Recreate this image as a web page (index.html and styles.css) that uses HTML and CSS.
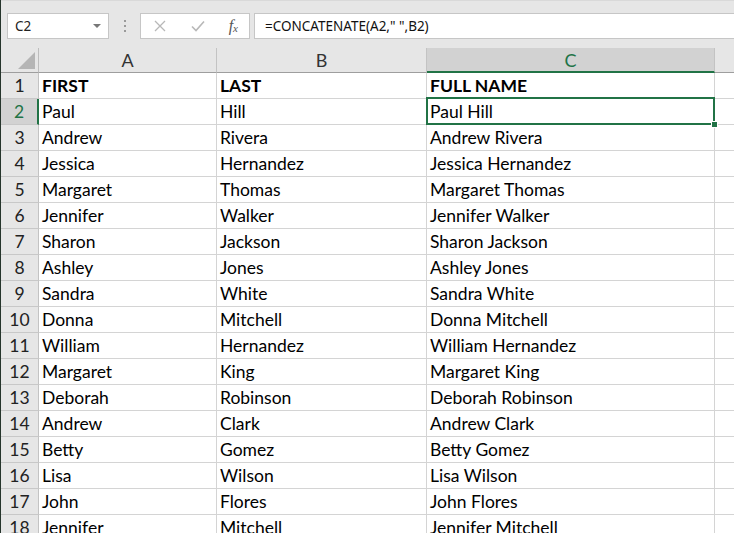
FILE: index.html
```html
<!DOCTYPE html>
<html>
<head>
<meta charset="utf-8">
<link rel="stylesheet" href="styles.css">
</head>
<body>
<div class="app">
  <div class="toolbar">
    <div class="namebox"><span>C2</span><span class="caret"></span></div>
    <div class="dots"><i></i><i></i><i></i></div>
    <div class="fxbox">
      <svg class="ico" width="14" height="14" viewBox="0 0 14 14"><path d="M2 2 L12 12 M12 2 L2 12" stroke="#b8b8b8" stroke-width="1.3" fill="none"/></svg>
      <svg class="ico" width="16" height="14" viewBox="0 0 16 14"><path d="M2 7.5 L6 11.5 L14 2.5" stroke="#b8b8b8" stroke-width="1.6" fill="none"/></svg>
      <span class="fx">f<sub>x</sub></span>
    </div>
    <div class="formula">=CONCATENATE(A2," ",B2)</div>
  </div>
  <div class="sheet">
    <div class="hd corner"><span class="tri"></span></div>
    <div class="hd col">A</div>
    <div class="hd col">B</div>
    <div class="hd col sel">C</div>
    <div class="hd col last"></div>
  </div>
  <div class="sheet rows" id="rows"></div>
</div>
<script src="app.js"></script>
</body>
</html>
```
FILE: app.js
```js
var data = [
  ["FIRST","LAST","FULL NAME"],
  ["Paul","Hill"],["Andrew","Rivera"],["Jessica","Hernandez"],["Margaret","Thomas"],
  ["Jennifer","Walker"],["Sharon","Jackson"],["Ashley","Jones"],["Sandra","White"],
  ["Donna","Mitchell"],["William","Hernandez"],["Margaret","King"],["Deborah","Robinson"],
  ["Andrew","Clark"],["Betty","Gomez"],["Lisa","Wilson"],["John","Flores"],["Jennifer","Mitchell"]
];
var html = "";
data.forEach(function (r, i) {
  var n = i + 1;
  var full = i === 0 ? r[2] : r[0] + " " + r[1];
  var b = i === 0 ? " bold" : "";
  html += '<div class="hd rh' + (n === 2 ? " sel" : "") + '">' + n + '</div>';
  html += '<div class="cell' + b + '">' + r[0] + '</div>';
  html += '<div class="cell' + b + '">' + r[1] + '</div>';
  html += '<div class="cell' + b + (n === 2 ? " active" : "") + '">' + full + (n === 2 ? '<span class="handle"></span>' : '') + '</div>';
  html += '<div class="cell last"></div>';
});
document.getElementById("rows").innerHTML = html;
```
FILE: styles.css
```css
html, body { margin: 0; padding: 0; background: #fff; }
body { width: 734px; height: 533px; overflow: hidden; }
.app { border-left: 1px solid #26352c; height: 533px; box-sizing: border-box; font-family: Lato, "Noto Sans", sans-serif; color: #000; }
.toolbar { height: 48px; background: #e6e6e6; box-sizing: border-box; padding-top: 12px; display: flex; align-items: flex-start; border-top: 1px solid #d9d9d9; }
.toolbar > div { height: 26px; box-sizing: border-box; background: #fff; border: 1px solid #c6c6c6; }
.namebox { margin-left: 6px; width: 102px; display: flex; align-items: center; justify-content: space-between; padding: 0 7px 0 7px; font-family: "Noto Sans", sans-serif; font-size: 13.5px; color: #222; }
.caret { width: 0; height: 0; border-left: 4px solid transparent; border-right: 4px solid transparent; border-top: 4px solid #777; }
.toolbar > .dots { background: transparent; border: none; width: 31px; display: flex; flex-direction: column; align-items: center; justify-content: center; gap: 3px; }
.dots i { width: 2px; height: 2px; background: #9a9a9a; display: block; }
.fxbox { width: 110px; display: flex; align-items: center; justify-content: space-between; padding: 0 11px 0 12px; }
.fx { font-family: "Liberation Serif", serif; font-style: italic; font-size: 16px; color: #555; line-height: 1; }
.fx sub { font-size: 11px; vertical-align: baseline; position: relative; top: 1px; }
.formula { margin-left: 4px; flex: 1; padding-left: 10px; font-family: "Noto Sans", sans-serif; font-size: 13.5px; line-height: 24px; color: #111; border-right: none !important; }
.sheet { display: grid; grid-template-columns: 38px 178px 210px 288px 1fr; }
.sheet.rows { grid-auto-rows: 26px; }
.hd { background: #e6e6e6; box-sizing: border-box; border-right: 1px solid #c3c3c3; border-bottom: 1px solid #c8c8c8; display: flex; align-items: center; justify-content: center; font-size: 17.5px; color: #222; }
.hd.col { height: 25px; border-bottom: 1px solid #9e9e9e; border-right: 1px solid #c3c3c3; font-size: 18px; color: #333; }
.hd.corner { height: 25px; border-bottom: 1px solid #9e9e9e; border-right: 1px solid #bdbdbd; position: relative; }
.tri { position: absolute; right: 3px; bottom: 3px; width: 0; height: 0; border-left: 17px solid transparent; border-bottom: 17px solid #b5b5b5; }
.hd.col.sel { background: #d2d2d2; color: #217346; border-bottom: 2px solid #217346; }
.hd.col.last { border-right: none; }
.hd.rh.sel { background: #d2d2d2; color: #217346; border-right: 2px solid #217346; }
.cell { box-sizing: border-box; border-right: 1px solid #d4d4d4; border-bottom: 1px solid #d4d4d4; font-size: 17.5px; line-height: 25px; padding-left: 3px; white-space: nowrap; overflow: visible; }
.cell.bold { font-weight: 700; }
.cell.last { border-right: none; }
.cell.active { position: relative; }
.cell.active::after { content: ""; position: absolute; left: -1px; top: -2px; right: -1px; bottom: -1px; border: 2px solid #217346; }
.handle { position: absolute; right: -4px; bottom: -4px; width: 5px; height: 5px; background: #217346; border: 1px solid #fff; z-index: 2; }
```
